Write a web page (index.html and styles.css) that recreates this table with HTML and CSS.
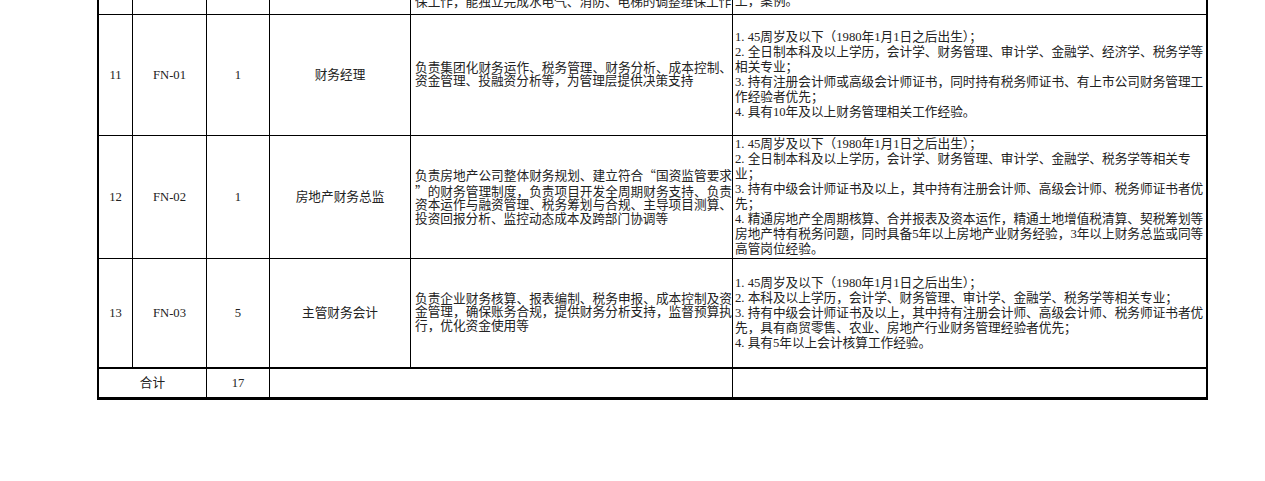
FILE: index.html
```html
<!DOCTYPE html>
<html lang="zh-CN">
<head>
<meta charset="utf-8">
<title>岗位表</title>
<link rel="stylesheet" href="styles.css">
</head>
<body>
<div class="sheet">
  <!-- partial row (cut at top) -->
  <div class="c prev"></div>
  <div class="c prev"></div>
  <div class="c prev"></div>
  <div class="c prev"></div>
  <div class="c duty prev"><div class="txt"><div class="ln">保工作，能独立完成水电气、消防、电梯的调整维保工作</div></div></div>
  <div class="c req last prev"><div class="txt"><div class="ln">上，案例。</div></div></div>

  <!-- row 11 -->
  <div class="c">11</div>
  <div class="c">FN-01</div>
  <div class="c">1</div>
  <div class="c">财务经理</div>
  <div class="c duty"><div class="txt">
    <div class="ln j">负责集团化财务运作、税务管理、财务分析、成本控制、</div>
    <div class="ln">资金管理、投融资分析等，为管理层提供决策支持</div>
  </div></div>
  <div class="c req last"><div class="txt">
    <div class="ln">1. 45周岁及以下（1980年1月1日之后出生）；</div>
    <div class="ln">2. 全日制本科及以上学历，会计学、财务管理、审计学、金融学、经济学、税务学等</div>
    <div class="ln">相关专业；</div>
    <div class="ln">3. 持有注册会计师或高级会计师证书，同时持有税务师证书、有上市公司财务管理工</div>
    <div class="ln">作经验者优先；</div>
    <div class="ln">4. 具有10年及以上财务管理相关工作经验。</div>
  </div></div>

  <!-- row 12 -->
  <div class="c">12</div>
  <div class="c">FN-02</div>
  <div class="c">1</div>
  <div class="c">房地产财务总监</div>
  <div class="c duty"><div class="txt">
    <div class="ln j">负责房地产公司整体财务规划、建立符合<span class="q">“</span>国资监管要求</div>
    <div class="ln j"><span class="q">”</span>的财务管理制度，负责项目开发全周期财务支持、负责</div>
    <div class="ln j">资本运作与融资管理、税务筹划与合规、主导项目测算、</div>
    <div class="ln">投资回报分析、监控动态成本及跨部门协调等</div>
  </div></div>
  <div class="c req last"><div class="txt">
    <div class="ln">1. 45周岁及以下（1980年1月1日之后出生）；</div>
    <div class="ln">2. 全日制本科及以上学历，会计学、财务管理、审计学、金融学、税务学等相关专</div>
    <div class="ln">业；</div>
    <div class="ln">3. 持有中级会计师证书及以上，其中持有注册会计师、高级会计师、税务师证书者优</div>
    <div class="ln">先；</div>
    <div class="ln">4. 精通房地产全周期核算、合并报表及资本运作，精通土地增值税清算、契税筹划等</div>
    <div class="ln">房地产特有税务问题，同时具备5年以上房地产业财务经验，3年以上财务总监或同等</div>
    <div class="ln">高管岗位经验。</div>
  </div></div>

  <!-- row 13 -->
  <div class="c r13">13</div>
  <div class="c r13">FN-03</div>
  <div class="c r13">5</div>
  <div class="c r13">主管财务会计</div>
  <div class="c duty r13"><div class="txt">
    <div class="ln j">负责企业财务核算、报表编制、税务申报、成本控制及资</div>
    <div class="ln j">金管理，确保账务合规，提供财务分析支持，监督预算执</div>
    <div class="ln">行，优化资金使用等</div>
  </div></div>
  <div class="c req last r13"><div class="txt">
    <div class="ln">1. 45周岁及以下（1980年1月1日之后出生）；</div>
    <div class="ln">2. 本科及以上学历，会计学、财务管理、审计学、金融学、税务学等相关专业；</div>
    <div class="ln">3. 持有中级会计师证书及以上，其中持有注册会计师、高级会计师、税务师证书者优</div>
    <div class="ln">先，具有商贸零售、农业、房地产行业财务管理经验者优先；</div>
    <div class="ln">4. 具有5年以上会计核算工作经验。</div>
  </div></div>

  <!-- total row -->
  <div class="c tot span2">合计</div>
  <div class="c tot">17</div>
  <div class="c tot span2"></div>
  <div class="c tot last"></div>
</div>
</body>
</html>
```

FILE: styles.css
```css
html, body {
  margin: 0;
  padding: 0;
  background: #ffffff;
}

body {
  font-family: "Liberation Serif", "Noto Sans CJK SC", serif;
  font-size: 12.67px;
  color: #222222;
  overflow: hidden;
}

.sheet {
  display: grid;
  grid-template-columns: 34px 74px 63px 141px 322px 473px;
  grid-template-rows: 40px 121px 123px 110px 29px;
  width: max-content;
  margin: -25px 0 0 97px;
  border-left: 2px solid #000;
  border-right: 2px solid #000;
  border-bottom: 2px solid #000;
}

.c {
  display: flex;
  align-items: center;
  justify-content: center;
  border-right: 1px solid #000;
  border-bottom: 1px solid #000;
  line-height: 15px;
  min-width: 0;
  overflow: hidden;
}

.c.last {
  border-right: 0;
}

.c.r13 {
  border-bottom-width: 2px;
}

.span2 {
  grid-column: span 2;
}

.duty {
  justify-content: flex-start;
  padding-left: 4px;
  line-height: 13.5px;
}

.req {
  justify-content: flex-start;
  padding-left: 2px;
  line-height: 15px;
}

.txt {
  flex: 1;
  min-width: 0;
}

.ln {
  white-space: nowrap;
}

.ln.j {
  text-align: justify;
  text-align-last: justify;
}

.q {
  font-family: "Noto Sans CJK SC", sans-serif;
}

.prev {
  align-items: flex-end;
  padding-bottom: 5px;
}
```
